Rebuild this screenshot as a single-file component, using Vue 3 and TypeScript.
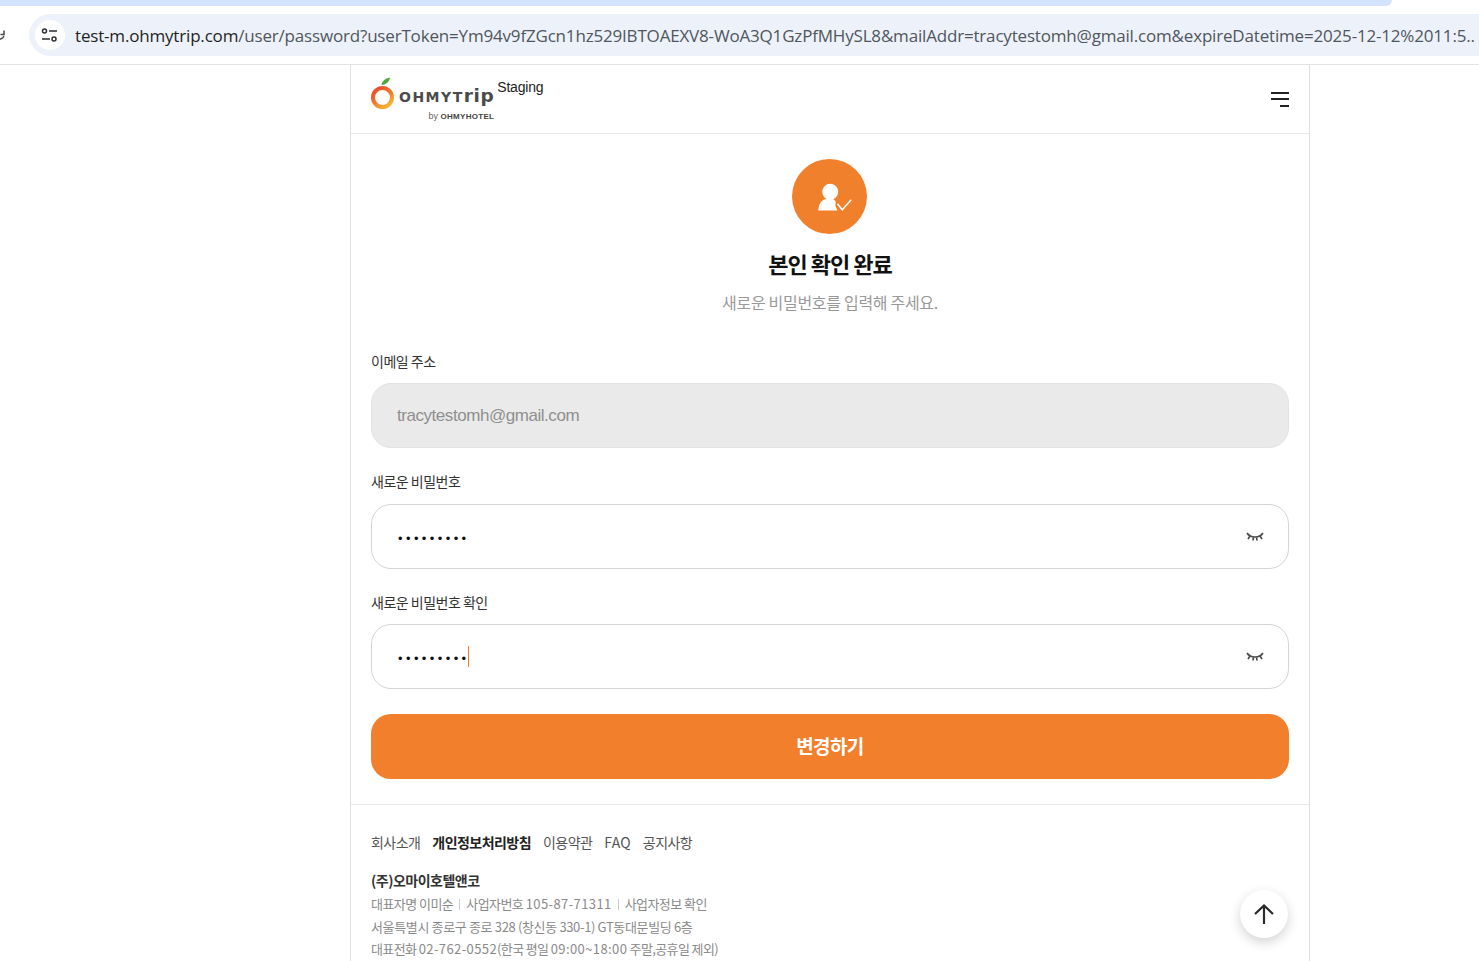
<script setup lang="ts">
const links = [
  { label: '회사소개', bold: false },
  { label: '개인정보처리방침', bold: true },
  { label: '이용약관', bold: false },
  { label: 'FAQ', bold: false },
  { label: '공지사항', bold: false },
]
</script>

<template>
  <div class="screen">
    <div class="chrome">
      <div class="tabstrip"></div>
      <div class="toolbar">
        <svg class="reload" width="6" height="16" viewBox="0 0 6 16"><path d="M-3 12.5a5 5 0 0 0 7-2.5M4 4.5v4H0.500" fill="none" stroke="#474747" stroke-width="1.500"/></svg>
        <div class="omnibox">
          <span class="tune">
            <svg width="18" height="14" viewBox="0 0 18 14" fill="none" stroke="#2b2f33" stroke-width="1.500">
              <circle cx="3.500" cy="3" r="2"/><path d="M8 3h8M1 11h8"/><circle cx="13" cy="11" r="2"/>
            </svg>
          </span>
          <span class="url"><span class="host">test-m.ohmytrip.com</span>/user/password?userToken=Ym94v9fZGcn1hz529IBTOAEXV8-WoA3Q1GzPfMHySL8&amp;mailAddr=tracytestomh@gmail.com&amp;expireDatetime=2025-12-12%2011:5..</span>
        </div>
      </div>
    </div>

    <main class="page">
      <header class="head">
        <div class="brand">
          <svg class="mark" width="24" height="34" viewBox="0 0 24 34">
            <defs>
              <linearGradient id="ring" x1="0" y1="0" x2="0.700" y2="1">
                <stop offset="0" stop-color="#e8452c"/><stop offset="0.550" stop-color="#f2762a"/><stop offset="1" stop-color="#f9b233"/>
              </linearGradient>
            </defs>
            <path d="M10.500 8C11 4 14 1.500 19 0.500 18.500 4.500 15.500 7.500 10.500 8Z" fill="#4fa63a"/>
            <circle cx="11.500" cy="20.500" r="9.500" fill="none" stroke="url(#ring)" stroke-width="4"/>
          </svg>
          <div class="wordmark">
            <span class="name">OHMYT<span class="low">rip</span></span>
            <span class="by">by <b>OHMYHOTEL</b></span>
          </div>
          <span class="staging">Staging</span>
        </div>
        <button class="menu" aria-label="메뉴"><i></i><i></i><i class="short"></i></button>
      </header>

      <section class="intro">
        <div class="badge">
          <svg width="44" height="32" viewBox="0 0 44 32">
            <circle cx="22.200" cy="10.800" r="8" fill="#fff"/>
            <path d="M10.200 29.500C11 22 14 18 19 18H25L27.500 20V25L29.500 29.500Z" fill="#fff"/>
            <path d="M29.500 22.800L34.200 28.800 43.200 18.800" fill="none" stroke="#fff" stroke-width="1.400"/>
          </svg>
        </div>
        <h1>본인 확인 완료</h1>
        <p>새로운 비밀번호를 입력해 주세요.</p>
      </section>

      <form class="form" @submit.prevent>
        <div class="field">
          <label>이메일 주소</label>
          <div class="box disabled">tracytestomh@gmail.com</div>
        </div>
        <div class="field second">
          <label>새로운 비밀번호</label>
          <div class="box">
            <span class="dots">•••••••••</span>
            <svg class="eye" width="20" height="12" viewBox="0 0 20 12" fill="none" stroke="#4a4a4a" stroke-width="1.700"><path d="M2 2c2 3 5 4 8 4s6-1 8-4M5 5l-2 3M8.500 6l-.5 3.500M11.500 6l.5 3.500M15 5l2 3"/></svg>
          </div>
        </div>
        <div class="field last">
          <label>새로운 비밀번호 확인</label>
          <div class="box">
            <span class="dots">•••••••••</span><span class="caret"></span>
            <svg class="eye" width="20" height="12" viewBox="0 0 20 12" fill="none" stroke="#4a4a4a" stroke-width="1.700"><path d="M2 2c2 3 5 4 8 4s6-1 8-4M5 5l-2 3M8.500 6l-.5 3.500M11.500 6l.5 3.500M15 5l2 3"/></svg>
          </div>
        </div>
        <button class="submit">변경하기</button>
      </form>

      <footer class="foot">
        <nav class="links">
          <a v-for="l in links" :key="l.label" :class="{ strong: l.bold }">{{ l.label }}</a>
        </nav>
        <div class="company">(주)오마이호텔앤코</div>
        <div class="line first">대표자명 이미순<span class="sep"></span>사업자번호 <span class="num">105-87-71311</span><span class="sep"></span>사업자정보 확인</div>
        <div class="line tight">서울특별시 종로구 종로 328 (창신동 330-1) GT동대문빌딩 6층</div>
        <div class="line">대표전화 <span class="num">02-762-0552</span>(한국 평일 <span class="num">09:00~18:00</span> 주말,공휴일 제외)</div>
        <button class="top" aria-label="맨 위로">
          <svg width="22" height="22" viewBox="0 0 22 22" fill="none" stroke="#2a2a2a" stroke-width="2.200"><path d="M11 21V2.500M2 11l9-8.500 9 8.500"/></svg>
        </button>
      </footer>
    </main>
  </div>
</template>

<style>
html, body { margin: 0; background: #fff; overflow: hidden; }
</style>

<style scoped>
.screen { width: 1479px; height: 961px; overflow: hidden; display: flex; flex-direction: column; font-family: "Noto Sans CJK KR", "Noto Sans", sans-serif; color: #222; }
.chrome { height: 65px; flex: none; border-bottom: 1px solid #e2e2e2; box-sizing: border-box; }
.tabstrip { width: 1392px; height: 6px; background: #d3e3fd; border-bottom-right-radius: 8px; }
.toolbar { display: flex; padding-top: 8px; }
.reload { flex: none; width: 6px; margin-top: 12px; margin-right: 23px; }
.omnibox { flex: 1; height: 42px; background: #edf2fa; border-radius: 21px 0 0 21px; display: flex; align-items: center; padding-left: 6px; min-width: 0; }
.tune { width: 30px; height: 30px; border-radius: 50%; background: #fff; display: flex; align-items: center; justify-content: center; flex: none; }
.url { margin-left: 10px; font: 17px/1 "Open Sans", sans-serif; color: #50565c; white-space: nowrap; letter-spacing: -0.180px; }
.host { color: #1f1f1f; }

.page { width: 960px; box-sizing: border-box; border-left: 1px solid #e0e0e0; border-right: 1px solid #e0e0e0; flex: 1; margin-left: 350px; }
.head { height: 69px; box-sizing: border-box; border-bottom: 1px solid #e8e8e8; display: flex; align-items: center; justify-content: space-between; padding: 0 20px; }
.brand { display: flex; align-items: flex-start; height: 56px; }
.mark { margin-top: 6px; }
.wordmark { display: flex; flex-direction: column; align-items: flex-end; margin-left: 4px; margin-top: 14px; }
.name { font: 700 14px/24px "DejaVu Sans", sans-serif; color: #4a4a4a; letter-spacing: 1.500px; white-space: nowrap; }
.low { font-size: 18.500px; line-height: 14px; letter-spacing: 0.600px; }
.by { font: 9px/11px "Liberation Sans", sans-serif; color: #666; margin-top: 2px; }
.by b { font-weight: 700; font-size: 8px; letter-spacing: 0.300px; color: #444; }
.staging { font: 14px/18px "Liberation Sans", sans-serif; letter-spacing: -0.200px; color: #222; margin: 7px 0 0 3px; }
.menu { border: 0; background: none; padding: 0; width: 18px; display: flex; flex-direction: column; align-items: flex-end; gap: 4.500px; }
.menu i { display: block; width: 18px; height: 2px; background: #222; }
.menu i.short { width: 9px; }

.intro { display: flex; flex-direction: column; align-items: center; padding-top: 25px; }
.badge { width: 75px; height: 75px; border-radius: 50%; background: #f1802c; display: flex; align-items: center; justify-content: center; margin-right: 1px; }
.intro h1 { margin: 13px 0 0; font-size: 22px; line-height: 32px; font-weight: 700; color: #111; letter-spacing: -1px; }
.intro p { margin: 11px 0 0; font-size: 16px; line-height: 24px; color: #999; letter-spacing: -0.300px; }

.form { padding: 37px 20px 25px; display: flex; flex-direction: column; }
.field { display: flex; flex-direction: column; margin-bottom: 23px; }
.field.last { margin-bottom: 25px; }
.field label { font-size: 14px; line-height: 20px; color: #333; letter-spacing: -0.500px; margin-bottom: 12px; }
.field.second label { margin-bottom: 13px; }
.box { height: 65px; box-sizing: border-box; border: 1px solid #d4d4d4; border-radius: 20px; display: flex; align-items: center; padding: 0 25px; position: relative; }
.disabled { background: #eaeaea; border-color: #e2e2e2; color: #8f8f8f; font: 17px "Liberation Sans", sans-serif; letter-spacing: -0.450px; padding-top: 1px; }
.dots { font: 13px/1 "Liberation Sans", sans-serif; letter-spacing: 3.400px; color: #111; margin: 3px 0 0 1px; }
.caret { width: 1px; height: 21px; background: #f27f2a; margin-left: -2px; flex: none; }
.eye { position: absolute; right: 23px; top: 26px; }
.submit { height: 65px; border: 0; border-radius: 20px; background: #f17f2b; color: #fff; font: 700 19px "Noto Sans CJK KR", sans-serif; letter-spacing: -0.600px; padding: 0 0 2px; }

.foot { border-top: 1px solid #e8e8e8; padding: 24px 20px 0; position: relative; }
.links { display: flex; gap: 12px; font-size: 14px; line-height: 26px; color: #555; letter-spacing: -0.550px; }
.links a:nth-child(4) { letter-spacing: 0.200px; }
.strong { font-weight: 700; color: #222; }
.company { font-size: 14px; line-height: 22px; font-weight: 700; color: #333; margin: 14px 0 2px; letter-spacing: -0.500px; }
.line { font-size: 13px; line-height: 22.500px; color: #8a8a8a; letter-spacing: -0.620px; white-space: nowrap; }
.line.first { letter-spacing: -0.550px; }
.line.tight { letter-spacing: -0.350px; }
.num { letter-spacing: 0.400px; }
.sep { display: inline-block; width: 1px; height: 11px; background: #ccc; margin: 0 6px; vertical-align: -1px; }
.top { position: absolute; right: 21px; top: 85px; width: 48px; height: 48px; border: 0; border-radius: 50%; background: #fff; box-shadow: 0 4px 12px rgba(0,0,0,.18); display: flex; align-items: center; justify-content: center; padding: 0; }
</style>
